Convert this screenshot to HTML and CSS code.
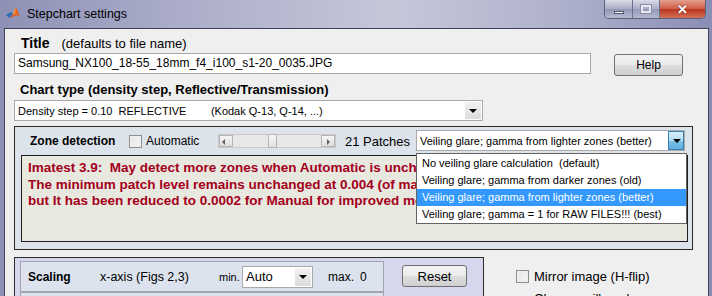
FILE: index.html
```html
<!DOCTYPE html>
<html lang="en">

<head>
    <meta charset="UTF-8">
    <title>Stepchart settings</title>
    <link rel="stylesheet" href="styles.css">
</head>

<body>
    <div class="window">
        <div class="titlebar">
            <svg class="app-icon" width="16" height="16" viewBox="0 0 16 16">
                <path d="M1 10 L6 7 L8 9 L5 13 Z" fill="#2d6fb5" />
                <path d="M5 13 L8 9 L11 2 L15 12 L12 10 Z" fill="#e3621c" />
                <path d="M8 9 L11 2 L10 9 Z" fill="#f6a33a" />
            </svg>
            <span class="win-title">Stepchart settings</span>
            <div class="win-btns">
                <span class="wb wb-min"><i></i></span>
                <span class="wb wb-max"><i></i></span>
                <span class="wb wb-close">&#x2715;</span>
            </div>
        </div>

        <div class="client">
            <div class="label-row">
                <b class="big">Title</b>
                <span class="hint">(defaults to file name)</span>
            </div>
            <div class="file-row">
                <div class="textbox">Samsung_NX100_18-55_18mm_f4_i100_s1-20_0035.JPG</div>
                <button class="btn help-btn">Help</button>
            </div>

            <div class="label-row chart-label">
                <b>Chart type (density step, Reflective/Transmission)</b>
            </div>
            <div class="select chart-select">
                <span class="sel-text">Density step = 0.10&nbsp; REFLECTIVE&nbsp;&nbsp;&nbsp;&nbsp;&nbsp;&nbsp;&nbsp;&nbsp;(Kodak Q-13, Q-14, ...)</span>
                <span class="sel-arrow"></span>
            </div>

            <div class="zone-panel">
                <div class="zone-head">
                    <b class="zone-title">Zone detection</b>
                    <span class="checkbox"></span>
                    <span class="auto-label">Automatic</span>
                    <div class="slider">
                        <span class="sl-btn sl-left"></span>
                        <span class="sl-track"><span class="sl-thumb"></span></span>
                        <span class="sl-btn sl-right"></span>
                    </div>
                    <span class="patches">21 Patches</span>
                    <div class="select glare-select">
                        <span class="sel-text">Veiling glare; gamma from lighter zones (better)</span>
                        <span class="sel-arrow hot"></span>
                    </div>
                </div>
                <div class="note">
                    <p>Imatest 3.9:&nbsp; May detect more zones when Automatic is unchecked (Manual).</p>
                    <p>The minimum patch level remains unchanged at 0.004 (of maximum) for Automatic,</p>
                    <p>but It has been reduced to 0.0002 for Manual for improved measurements.</p>
                </div>

                <ul class="dropdown">
                    <li>No veiling glare calculation&nbsp; (default)</li>
                    <li>Veiling glare; gamma from darker zones (old)</li>
                    <li class="active">Veiling glare; gamma from lighter zones (better)</li>
                    <li>Veiling glare; gamma = 1 for RAW FILES!!! (best)</li>
                </ul>
            </div>

            <div class="lower">
                <div class="scaling-panel">
                    <div class="scaling-row">
                        <b class="sc-title">Scaling</b>
                        <span class="sc-axis">x-axis (Figs 2,3)</span>
                        <span class="sc-min">min.</span>
                        <div class="select auto-select">
                            <span class="sel-text">Auto</span>
                            <span class="sel-arrow"></span>
                        </div>
                        <span class="sc-max">max.</span>
                        <span class="sc-zero">0</span>
                    </div>
                    <button class="btn reset-btn">Reset</button>
                    <div class="scaling-row2"></div>
                </div>
                <div class="mirror">
                    <div class="mirror-line">
                        <span class="checkbox"></span>
                        <span>Mirror image (H-flip)</span>
                    </div>
                    <div class="mirror-note">Change will apply</div>
                </div>
            </div>
        </div>
    </div>
</body>

</html>
```

FILE: styles.css
```css
* {
    margin: 0;
    padding: 0;
    box-sizing: border-box;
    list-style: none;
}

body {
    width: 712px;
    height: 296px;
    overflow: hidden;
    font-family: "Liberation Sans", Arial, sans-serif;
    color: #000;
    background: #8f93b8;
}

.window {
    width: 712px;
    height: 296px;
    background: linear-gradient(to right, #8d91b5 0%, #abadc9 25%, #c6c7d9 55%, #b0b2cc 78%, #8a8eb6 100%);
}

/* title bar */
.titlebar {
    height: 28px;
    display: flex;
    align-items: flex-start;
}

.app-icon {
    margin: 5px 0 0 5px;
}

.win-title {
    margin: 6px 0 0 6px;
    font-size: 12.5px;
    line-height: 16px;
    color: #000;
}

.win-btns {
    margin-left: auto;
    margin-right: 6px;
    display: flex;
    border: 1px solid #5c6078;
    border-top: 0;
    border-radius: 0 0 5px 5px;
    overflow: hidden;
    height: 19px;
}

.wb {
    height: 18px;
    display: flex;
    align-items: center;
    justify-content: center;
    background: linear-gradient(#d9dbe6, #a9acc4 50%, #9598b6 51%, #b6b9d0);
    border-right: 1px solid #6c7090;
}

.wb-min {
    width: 28px;
}

.wb-min i {
    width: 10px;
    height: 3px;
    margin-top: 6px;
    background: #fff;
    border: 1px solid #50546c;
}

.wb-max {
    width: 27px;
}

.wb-max i {
    width: 10px;
    height: 8px;
    border: 2px solid #e6e7ee;
    outline: 1px solid #8d90a8;
}

.wb-close {
    width: 45px;
    border-right: 0;
    color: #fff;
    font-size: 13px;
    font-weight: bold;
    background: linear-gradient(#e3a08e, #cf5a45 50%, #b93520 51%, #d4705a);
    text-shadow: 0 0 2px #5a1a10;
}

/* client area */
.client {
    margin-left: 4px;
    width: 705px;
    height: 268px;
    background: #efefef;
    border: 1px solid #3f4258;
    border-bottom: 0;
    padding: 6px 0 0 9px;
}

.label-row {
    height: 16px;
    padding-left: 7px;
    display: flex;
    align-items: baseline;
    line-height: 16px;
}

.big {
    font-size: 14px;
}

.hint {
    margin-left: 12px;
    font-size: 13px;
}

.file-row {
    margin-top: 2px;
    display: flex;
    align-items: flex-start;
}

.textbox {
    width: 577px;
    height: 21px;
    border: 1px solid #a9a9a9;
    background: #fff;
    font-size: 12px;
    line-height: 19px;
    padding-left: 3px;
    white-space: nowrap;
}

.btn {
    font-family: "Liberation Sans", Arial, sans-serif;
    font-size: 12px;
    color: #000;
    border: 1px solid #707070;
    border-radius: 3px;
    background: linear-gradient(#f2f2f2, #ebebeb 50%, #dddddd 51%, #cfcfcf);
}

.help-btn {
    width: 69px;
    height: 22px;
    margin: 1px 0 0 23px;
}

.chart-label {
    margin-top: 6px;
    padding-left: 6px;
    font-size: 13px;
}

.select {
    display: flex;
    align-items: stretch;
    background: #fff;
    border: 1px solid #a9a9a9;
    font-size: 11px;
    white-space: nowrap;
}

.sel-text {
    flex: 1;
    padding-left: 3px;
    overflow: hidden;
    display: flex;
    align-items: center;
}

.sel-arrow {
    width: 16px;
    margin: 1px;
    background: linear-gradient(#f2f2f2, #dcdcdc);
    position: relative;
}

.sel-arrow::after {
    content: "";
    position: absolute;
    left: 4px;
    top: 50%;
    margin-top: -2px;
    border: 4px solid transparent;
    border-top: 4px solid #000;
    border-bottom: 0;
}

.sel-arrow.hot {
    background: linear-gradient(#d8eefb, #b4dcf4 50%, #7fc1ea 51%, #5eaee0);
    border: 1px solid #3c7fb1;
    margin: 0;
}

.chart-select {
    margin-top: 2px;
    width: 469px;
    height: 21px;
}

/* zone detection */
.zone-panel {
    position: relative;
    margin-top: 5px;
    width: 679px;
    height: 124px;
    border: 1px solid #2b2b2b;
    background: #dde3ea;
    padding-left: 6px;
}

.zone-head {
    height: 28px;
    display: flex;
    align-items: center;
    padding-left: 9px;
}

.zone-title {
    width: 99px;
    font-size: 12px;
}

.checkbox {
    flex: none;
    width: 13px;
    height: 13px;
    border: 1px solid #8e8f8f;
    background: linear-gradient(135deg, #e0e0e0, #fafafa);
    box-shadow: inset 0 0 0 2px #eeeeee;
}

.auto-label {
    width: 76px;
    padding-left: 4px;
    font-size: 12px;
}

.slider {
    width: 118px;
    height: 14px;
    display: flex;
    border: 1px solid #c8c8c8;
    background: #e8e8e8;
}

.sl-btn {
    width: 14px;
    background: linear-gradient(#f6f6f6, #dedede);
    border: 1px solid #b5b5b5;
    position: relative;
}

.sl-btn::after {
    content: "";
    position: absolute;
    top: 3px;
    border: 3px solid transparent;
}

.sl-left::after {
    left: 2px;
    border-right: 3px solid #606060;
    border-left: 0;
}

.sl-right::after {
    left: 5px;
    border-left: 3px solid #606060;
    border-right: 0;
}

.sl-track {
    flex: 1;
    position: relative;
}

.sl-thumb {
    position: absolute;
    left: 35px;
    top: -1px;
    width: 9px;
    height: 14px;
    border: 1px solid #b5b5b5;
    background: linear-gradient(#f8f8f8, #e0e0e0);
}

.patches {
    width: 80px;
    padding-left: 9px;
    font-size: 13px;
}

.glare-select {
    width: 269px;
    height: 21px;
    margin-top: -1px;
}

.note {
    width: 667px;
    height: 87px;
    border: 1px solid #1e1e1e;
    background-color: #e6e6e2;
    background-image: radial-gradient(#f4f1c4 0.6px, transparent 0.8px);
    background-size: 4px 4px;
    padding: 4px 0 0 6px;
    overflow: hidden;
    color: #a3001c;
    font-size: 13.5px;
    font-weight: bold;
    line-height: 16.5px;
    white-space: nowrap;
}

.dropdown {
    position: absolute;
    left: 401px;
    top: 26px;
    width: 271px;
    height: 71px;
    background: #fff;
    border: 1px solid #646464;
    font-size: 11px;
    padding-top: 1px;
    z-index: 2;
}

.dropdown li {
    height: 17px;
    line-height: 17px;
    padding-left: 5px;
    white-space: nowrap;
}

.dropdown li.active {
    background: #3399ff;
    color: #fff;
}

/* scaling */
.lower {
    margin-top: 7px;
    display: flex;
    align-items: flex-start;
}

.scaling-panel {
    width: 470px;
    height: 40px;
    border: 1px solid #2b2b2b;
    border-bottom: 0;
    background: #d6d6ec;
    padding: 3px 0 0 5px;
    display: flex;
    flex-wrap: wrap;
    align-items: flex-start;
}

.scaling-row {
    width: 364px;
    height: 31px;
    border: 1px solid #a3a3b3;
    background: #dce3ee;
    display: flex;
    align-items: center;
    padding-left: 7px;
    font-size: 12px;
}

.sc-title {
    width: 72px;
}

.sc-axis {
    width: 119px;
    font-size: 12.5px;
}

.sc-min {
    width: 23px;
    font-size: 11px;
}

.auto-select {
    width: 71px;
    height: 22px;
    font-size: 13px;
}

.sc-max {
    margin-left: 15px;
    width: 32px;
    font-size: 12px;
}

.sc-zero {
    font-size: 12px;
}

.reset-btn {
    width: 65px;
    height: 22px;
    margin: 4px 0 0 18px;
    font-size: 13px;
}

.scaling-row2 {
    width: 364px;
    height: 6px;
    border: 1px solid #a3a3b3;
    border-bottom: 0;
    background: #dce3ee;
}

.mirror {
    margin-left: 32px;
    padding-top: 12px;
    font-size: 13px;
}

.mirror-line {
    display: flex;
    align-items: center;
    gap: 5px;
    height: 14px;
}

.mirror-note {
    margin-top: 8px;
    padding-left: 18px;
    font-size: 13px;
}
```
